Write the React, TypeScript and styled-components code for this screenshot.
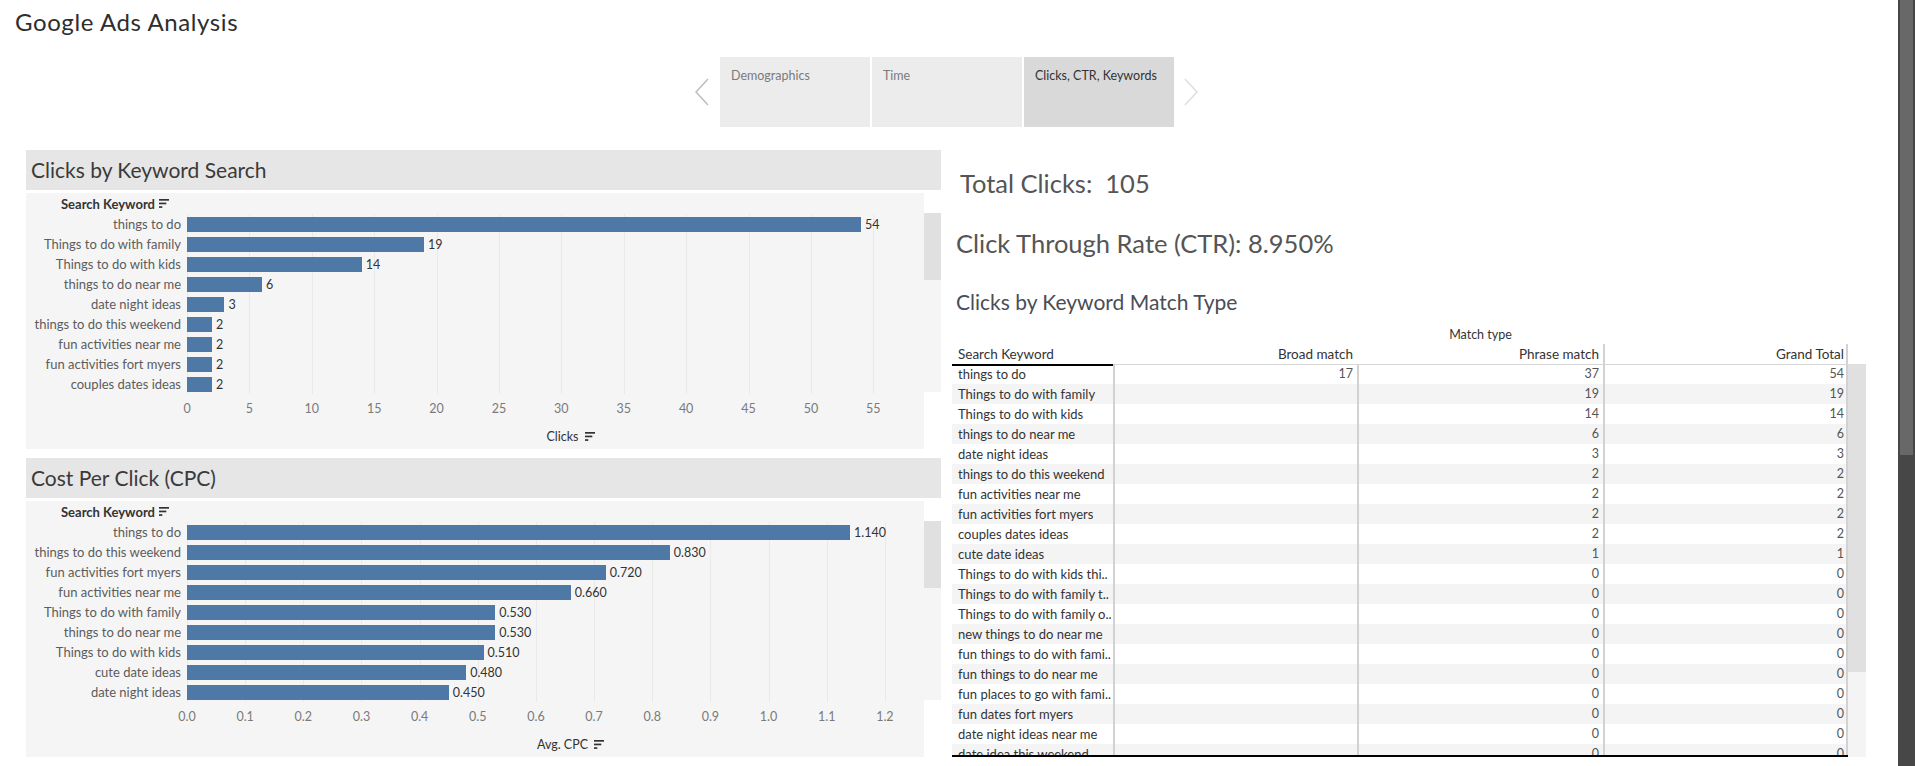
import React from "react";
import styled, { createGlobalStyle } from "styled-components";

const GlobalStyle = createGlobalStyle`
  html, body { margin: 0; padding: 0; background: #fff; }
  body { font-family: Lato, "Liberation Sans", sans-serif; overflow: hidden; }
  * { box-sizing: border-box; }
`;

const Screen = styled.div`
  display: flex;
  width: 1915px;
  height: 766px;
  overflow: hidden;
  background: #fff;
`;

const Main = styled.div`
  flex: 1;
  min-width: 0;
  display: flex;
  flex-direction: column;
`;

const PageScrollbar = styled.div`
  flex: none;
  width: 17px;
  padding: 0 2px;
  background: #474747;
`;

const PageThumb = styled.div`
  height: 455px;
  background: #686868;
`;

const Title = styled.h1`
  margin: 0;
  height: 44px;
  padding-left: 15px;
  font-size: 24px;
  letter-spacing: 0.6px;
  line-height: 44px;
  font-weight: 400;
  color: #2e2e2e;
`;

const NavRow = styled.nav`
  display: flex;
  align-items: center;
  height: 70px;
  margin-top: 13px;
  padding-left: 695px;
`;

const Chevron = styled.svg<{ $faded?: boolean }>`
  flex: none;
  width: 14px;
  height: 28px;
  stroke: ${(p) => (p.$faded ? "#dedede" : "#bdbdbd")};
  stroke-width: 1.5;
  fill: none;
`;

const Tabs = styled.div`
  display: flex;
  gap: 2px;
  margin: 0 10px 0 11px;
`;

const Tab = styled.div<{ $active?: boolean }>`
  width: 150px;
  height: 70px;
  padding: 11px 11px;
  font-size: 12.5px;
  line-height: 16px;
  background: ${(p) => (p.$active ? "#d9d9d9" : "#ececec")};
  color: ${(p) => (p.$active ? "#333" : "#7a7a7a")};
`;

const Content = styled.div`
  display: flex;
  align-items: flex-start;
  gap: 11px;
  margin-top: 23px;
  padding-left: 26px;
`;

const LeftColumn = styled.div`
  flex: none;
  width: 915px;
  display: flex;
  flex-direction: column;
  gap: 9px;
`;

const Section = styled.section`
  display: flex;
  flex-direction: column;
  gap: 3px;
`;

const SectionHeader = styled.h2`
  margin: 0;
  height: 40px;
  padding-left: 5px;
  background: #e6e6e6;
  font-size: 21px;
  line-height: 40px;
  font-weight: 400;
  color: #3a3a3a;
`;

const PanelRow = styled.div`
  display: flex;
  align-items: flex-start;
`;

const ChartPanel = styled.div`
  flex: none;
  width: 898px;
  height: 256px;
  display: flex;
  flex-direction: column;
  background: #f5f5f5;
`;

const PanelScroll = styled.div`
  flex: none;
  width: 17px;
  height: 179px;
  margin-top: 20px;
  background: #f5f5f5;
`;

const PanelThumb = styled.div`
  height: 67px;
  background: #e0e0e0;
`;

const FieldHeader = styled.div`
  height: 21px;
  display: flex;
  align-items: center;
  gap: 4px;
  padding-left: 35px;
  font-size: 13px;
  font-weight: 700;
  color: #333;
`;

const ChartGrid = styled.div`
  display: grid;
  grid-template-columns: 161px 1fr;
`;

const Labels = styled.div`
  display: flex;
  flex-direction: column;
`;

const Label = styled.div`
  height: 20px;
  padding-right: 6px;
  font-size: 13px;
  line-height: 20px;
  text-align: right;
  white-space: nowrap;
  color: #5c5c5c;
`;

const Plot = styled.div<{ $step: number }>`
  display: flex;
  flex-direction: column;
  background-image: repeating-linear-gradient(
    to right,
    #e9e9e9 0 1px,
    transparent 1px ${(p) => p.$step}px
  );
`;

const BarRow = styled.div`
  height: 20px;
  display: flex;
  align-items: center;
`;

const Bar = styled.div`
  height: 15px;
  background: #4e79a7;
`;

const BarValue = styled.span`
  margin-left: 4px;
  font-size: 12.5px;
  color: #333;
`;

const Ticks = styled.div<{ $step: number }>`
  display: flex;
  height: 29px;
  margin-left: ${(p) => -p.$step / 2}px;
`;

const Tick = styled.div<{ $step: number }>`
  flex: none;
  width: ${(p) => p.$step}px;
  font-size: 12.5px;
  line-height: 29px;
  text-align: center;
  color: #7a7a7a;
`;

const AxisTitle = styled.div`
  height: 26px;
  display: flex;
  align-items: center;
  justify-content: center;
  gap: 6px;
  padding-left: 191px;
  font-size: 12.5px;
  color: #333;
`;

const SortSvg = styled.svg`
  flex: none;
  width: 10px;
  height: 9px;
  fill: #333;
`;

const RightColumn = styled.div`
  flex: none;
  width: 914px;
  display: flex;
  flex-direction: column;
`;

const BigStat = styled.div<{ $top: number; $indent: number }>`
  margin-top: ${(p) => p.$top}px;
  padding-left: ${(p) => p.$indent}px;
  font-size: 25.5px;
  line-height: 30px;
  white-space: pre;
  color: #555;
`;

const MatchTitle = styled.h3`
  margin: 32px 0 0;
  padding-left: 4px;
  font-size: 21px;
  line-height: 24px;
  font-weight: 400;
  color: #4a4d55;
`;

const Table = styled.div`
  display: flex;
  flex-direction: column;
  margin-top: 11px;
`;

const COLS = "161px 244px 246px 245px";

const GroupRow = styled.div`
  display: grid;
  grid-template-columns: 161px 735px;
  height: 19px;
`;

const GroupLabel = styled.div`
  grid-column: 2;
  font-size: 12.5px;
  line-height: 19px;
  text-align: center;
  color: #333;
`;

const HeadRow = styled.div`
  display: grid;
  grid-template-columns: ${COLS};
  width: 896px;
  height: 20px;
`;

const HeadCell = styled.div<{ $kind: "key" | "num" | "total" }>`
  position: relative;
  z-index: 1;
  padding: ${(p) =>
    p.$kind === "key" ? "0 0 0 6px" : p.$kind === "total" ? "0 2px 0 0" : "0 4px 0 0"};
  font-size: 13.5px;
  line-height: 20px;
  white-space: nowrap;
  text-align: ${(p) => (p.$kind === "key" ? "left" : "right")};
  color: #333;
  box-shadow: ${(p) => (p.$kind === "key" ? "0 2px 0 #000" : "0 1px 0 #d6d6d6")};
  border-left: ${(p) => (p.$kind === "total" ? "2px solid #d2d2d2" : "none")};
  border-right: ${(p) => (p.$kind === "total" ? "2px solid #d2d2d2" : "none")};
`;

const BodyWrap = styled.div`
  display: flex;
  height: 393px;
`;

const Body = styled.div`
  width: 896px;
  height: 393px;
  overflow: hidden;
  border-bottom: 2px solid #000;
`;

const BodyRow = styled.div<{ $shade: boolean }>`
  display: grid;
  grid-template-columns: ${COLS};
  height: 20px;
  background: ${(p) => (p.$shade ? "#f4f4f4" : "transparent")};
`;

const KeyCell = styled.div`
  padding-left: 6px;
  font-size: 13px;
  line-height: 20px;
  white-space: nowrap;
  overflow: hidden;
  color: #333;
`;

const NumCell = styled.div<{ $last?: boolean }>`
  padding-right: ${(p) => (p.$last ? 2 : 4)}px;
  border-left: 2px solid #d2d2d2;
  border-right: ${(p) => (p.$last ? "2px solid #d2d2d2" : "none")};
  font-size: 12.5px;
  line-height: 20px;
  text-align: right;
  color: #555;
`;

const TableScroll = styled.div`
  flex: none;
  width: 18px;
  height: 393px;
  background: #f4f4f4;
`;

const TableThumb = styled.div`
  height: 308px;
  background: #e0e0e0;
`;

type Datum = { label: string; value: number };

const SortIcon = () => (
  <SortSvg viewBox="0 0 10 9">
    <rect x="0" y="0" width="10" height="1.7" />
    <rect x="0" y="3.6" width="7.3" height="1.7" />
    <rect x="0" y="7.2" width="3.3" height="1.7" />
  </SortSvg>
);

function BarChart({
  data,
  scale,
  ticks,
  step,
  format,
  axisTitle,
}: {
  data: Datum[];
  scale: number;
  ticks: string[];
  step: number;
  format: (v: number) => string;
  axisTitle: string;
}) {
  return (
    <PanelRow>
      <ChartPanel>
        <FieldHeader>
          Search Keyword <SortIcon />
        </FieldHeader>
        <ChartGrid>
          <Labels>
            {data.map((d) => (
              <Label key={d.label}>{d.label}</Label>
            ))}
          </Labels>
          <Plot $step={step}>
            {data.map((d) => (
              <BarRow key={d.label}>
                <Bar style={{ width: `${d.value * scale}px` }} />
                <BarValue>{format(d.value)}</BarValue>
              </BarRow>
            ))}
          </Plot>
          <div />
          <Ticks $step={step}>
            {ticks.map((t) => (
              <Tick key={t} $step={step}>
                {t}
              </Tick>
            ))}
          </Ticks>
        </ChartGrid>
        <AxisTitle>
          {axisTitle} <SortIcon />
        </AxisTitle>
      </ChartPanel>
      <PanelScroll>
        <PanelThumb />
      </PanelScroll>
    </PanelRow>
  );
}

const clicks: Datum[] = [
  { label: "things to do", value: 54 },
  { label: "Things to do with family", value: 19 },
  { label: "Things to do with kids", value: 14 },
  { label: "things to do near me", value: 6 },
  { label: "date night ideas", value: 3 },
  { label: "things to do this weekend", value: 2 },
  { label: "fun activities near me", value: 2 },
  { label: "fun activities fort myers", value: 2 },
  { label: "couples dates ideas", value: 2 },
];

const cpc: Datum[] = [
  { label: "things to do", value: 1.14 },
  { label: "things to do this weekend", value: 0.83 },
  { label: "fun activities fort myers", value: 0.72 },
  { label: "fun activities near me", value: 0.66 },
  { label: "Things to do with family", value: 0.53 },
  { label: "things to do near me", value: 0.53 },
  { label: "Things to do with kids", value: 0.51 },
  { label: "cute date ideas", value: 0.48 },
  { label: "date night ideas", value: 0.45 },
];

type MatchRow = [string, number | null, number, number];

const matchRows: MatchRow[] = [
  ["things to do", 17, 37, 54],
  ["Things to do with family", null, 19, 19],
  ["Things to do with kids", null, 14, 14],
  ["things to do near me", null, 6, 6],
  ["date night ideas", null, 3, 3],
  ["things to do this weekend", null, 2, 2],
  ["fun activities near me", null, 2, 2],
  ["fun activities fort myers", null, 2, 2],
  ["couples dates ideas", null, 2, 2],
  ["cute date ideas", null, 1, 1],
  ["Things to do with kids thi..", null, 0, 0],
  ["Things to do with family t..", null, 0, 0],
  ["Things to do with family o..", null, 0, 0],
  ["new things to do near me", null, 0, 0],
  ["fun things to do with fami..", null, 0, 0],
  ["fun things to do near me", null, 0, 0],
  ["fun places to go with fami..", null, 0, 0],
  ["fun dates fort myers", null, 0, 0],
  ["date night ideas near me", null, 0, 0],
  ["date idea this weekend", null, 0, 0],
];

const clickTicks = Array.from({ length: 12 }, (_, i) => String(i * 5));
const cpcTicks = Array.from({ length: 13 }, (_, i) => (i / 10).toFixed(1));

export default function App() {
  return (
    <>
      <GlobalStyle />
      <Screen>
        <Main>
          <Title>Google Ads Analysis</Title>
          <NavRow>
            <Chevron viewBox="0 0 14 28">
              <polyline points="13,1 1,14 13,27" />
            </Chevron>
            <Tabs>
              <Tab>Demographics</Tab>
              <Tab>Time</Tab>
              <Tab $active>Clicks, CTR, Keywords</Tab>
            </Tabs>
            <Chevron viewBox="0 0 14 28" $faded>
              <polyline points="1,1 13,14 1,27" />
            </Chevron>
          </NavRow>
          <Content>
            <LeftColumn>
              <Section>
                <SectionHeader>Clicks by Keyword Search</SectionHeader>
                <BarChart
                  data={clicks}
                  scale={12.48}
                  step={62.4}
                  ticks={clickTicks}
                  format={(v) => String(v)}
                  axisTitle="Clicks"
                />
              </Section>
              <Section>
                <SectionHeader>Cost Per Click (CPC)</SectionHeader>
                <BarChart
                  data={cpc}
                  scale={581.6}
                  step={58.16}
                  ticks={cpcTicks}
                  format={(v) => v.toFixed(3)}
                  axisTitle="Avg. CPC"
                />
              </Section>
            </LeftColumn>
            <RightColumn>
              <BigStat $top={18} $indent={8}>
                {"Total Clicks:  105"}
              </BigStat>
              <BigStat $top={30} $indent={4}>
                Click Through Rate (CTR): 8.950%
              </BigStat>
              <MatchTitle>Clicks by Keyword Match Type</MatchTitle>
              <Table>
                <GroupRow>
                  <GroupLabel>Match type</GroupLabel>
                </GroupRow>
                <HeadRow>
                  <HeadCell $kind="key">Search Keyword</HeadCell>
                  <HeadCell $kind="num">Broad match</HeadCell>
                  <HeadCell $kind="num">Phrase match</HeadCell>
                  <HeadCell $kind="total">Grand Total</HeadCell>
                </HeadRow>
                <BodyWrap>
                  <Body>
                    {matchRows.map(([k, b, p, g], i) => (
                      <BodyRow key={k} $shade={i % 2 === 1}>
                        <KeyCell>{k}</KeyCell>
                        <NumCell>{b ?? ""}</NumCell>
                        <NumCell>{p}</NumCell>
                        <NumCell $last>{g}</NumCell>
                      </BodyRow>
                    ))}
                  </Body>
                  <TableScroll>
                    <TableThumb />
                  </TableScroll>
                </BodyWrap>
              </Table>
            </RightColumn>
          </Content>
        </Main>
        <PageScrollbar>
          <PageThumb />
        </PageScrollbar>
      </Screen>
    </>
  );
}
